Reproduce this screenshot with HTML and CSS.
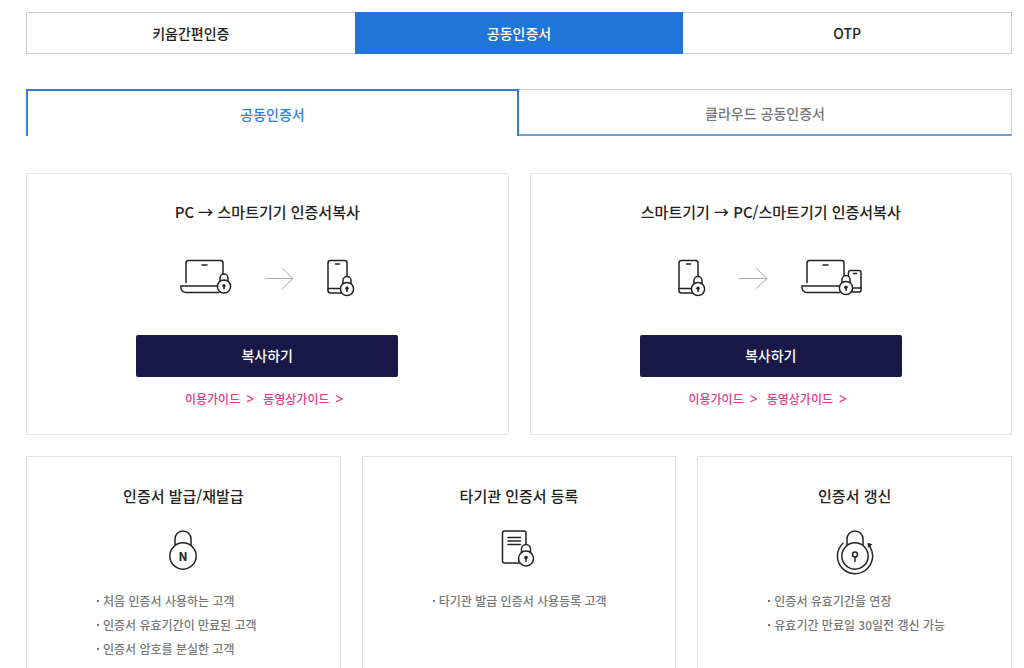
FILE: index.html
```html
<!DOCTYPE html>
<html lang="ko">
<head>
<meta charset="utf-8">
<meta name="viewport" content="width=device-width, initial-scale=1">
<title>공동인증서</title>
<link rel="stylesheet" href="styles.css">
</head>
<body>
<svg class="sprite" aria-hidden="true">
  <symbol id="lock-small" viewBox="0 0 16 22">
    <path class="solid" d="M4 10V5.500a4 4 0 0 1 8 0V10"/>
    <circle class="solid" cx="8" cy="14" r="6.600"/>
    <circle class="dot" cx="8" cy="13.200" r="1.700"/>
    <path d="M8 13.500v3"/>
  </symbol>
  <symbol id="phone" viewBox="0 0 28 38">
    <rect x="1" y="1.500" width="19" height="32.500" rx="2.500"/>
    <path d="M1 29.500h19M8.500 5h4"/>
    <use href="#lock-small" x="12" y="16" width="16" height="22"/>
  </symbol>
  <symbol id="arrow" viewBox="0 0 29 38">
    <path d="M0 19.500h28M17.500 9.500l10.500 10-10.500 10"/>
  </symbol>
</svg>

<main class="page">
  <nav class="tabs" aria-label="인증 방식">
    <button class="tab" type="button">키움간편인증</button>
    <button class="tab tab-active" type="button" aria-current="true">공동인증서</button>
    <button class="tab" type="button">OTP</button>
  </nav>

  <nav class="subtabs" aria-label="인증서 종류">
    <button class="subtab subtab-active" type="button" aria-current="true">공동인증서</button>
    <button class="subtab" type="button">클라우드 공동인증서</button>
  </nav>

  <section class="copy-cards">
    <article class="card copy-card">
      <h2 class="card-title">PC → 스마트기기 인증서복사</h2>
      <div class="devices">
        <svg class="icon" width="52" height="38" viewBox="0 0 52 38" aria-hidden="true">
          <path d="M6 23.500V4a2.500 2.500 0 0 1 2.500-2.500h32A2.500 2.500 0 0 1 43 4v12M22 6h5"/>
          <path d="M38 27H.800c0 4 2 6.500 5.200 6.500h33"/>
          <use href="#lock-small" x="36" y="13.500" width="16" height="22"/>
        </svg>
        <svg class="icon icon-arrow" width="29" height="38" aria-hidden="true"><use href="#arrow"/></svg>
        <svg class="icon" width="28" height="38" aria-hidden="true"><use href="#phone"/></svg>
      </div>
      <button class="copy-button" type="button">복사하기</button>
      <div class="guides">
        <a class="guide" href="#guide-pc">이용가이드 <span class="chevron">&gt;</span></a>
        <a class="guide" href="#video-pc">동영상가이드 <span class="chevron">&gt;</span></a>
      </div>
    </article>

    <article class="card copy-card">
      <h2 class="card-title">스마트기기 → PC/스마트기기 인증서복사</h2>
      <div class="devices">
        <svg class="icon" width="28" height="38" aria-hidden="true"><use href="#phone"/></svg>
        <svg class="icon icon-arrow" width="29" height="38" aria-hidden="true"><use href="#arrow"/></svg>
        <svg class="icon" width="62" height="38" viewBox="0 0 62 38" aria-hidden="true">
          <path d="M6 23.500V4a2.500 2.500 0 0 1 2.500-2.500h32A2.500 2.500 0 0 1 43 4v12M22 6h5"/>
          <path d="M38 27H.800c0 4 2 6.500 5.200 6.500h33"/>
          <rect class="solid" x="47.500" y="11.500" width="12.500" height="21.500" rx="2"/>
          <path d="M48 29h12M52.500 14.500h3"/>
          <use href="#lock-small" x="37" y="15" width="16" height="22"/>
        </svg>
      </div>
      <button class="copy-button" type="button">복사하기</button>
      <div class="guides">
        <a class="guide" href="#guide-mobile">이용가이드 <span class="chevron">&gt;</span></a>
        <a class="guide" href="#video-mobile">동영상가이드 <span class="chevron">&gt;</span></a>
      </div>
    </article>
  </section>

  <section class="service-cards">
    <article class="card service-card">
      <h2 class="card-title">인증서 발급/재발급</h2>
      <svg class="icon service-icon" width="38" height="46" viewBox="0 0 38 46" aria-hidden="true">
        <path d="M11 16V9a8 8 0 0 1 16 0v7"/>
        <circle class="solid" cx="19" cy="26" r="13.200"/>
        <text class="lock-letter" x="19" y="30.500">N</text>
      </svg>
      <ul class="notes">
        <li class="note">처음 인증서 사용하는 고객</li>
        <li class="note">인증서 유효기간이 만료된 고객</li>
        <li class="note">인증서 암호를 분실한 고객</li>
      </ul>
    </article>

    <article class="card service-card">
      <h2 class="card-title">타기관 인증서 등록</h2>
      <svg class="icon service-icon" width="38" height="46" viewBox="0 0 38 46" aria-hidden="true">
        <rect x="2.500" y="1" width="23.500" height="32" rx="2"/>
        <path d="M8 7.500h12.500M8 11h12.500M8 14.500h12.500"/>
        <path class="solid" d="M21.500 23v-4a4.500 4.500 0 0 1 9 0v4"/>
        <circle class="solid" cx="26" cy="28.500" r="7.500"/>
        <circle class="dot" cx="26" cy="27.500" r="1.800"/>
        <path d="M26 28v3.500"/>
      </svg>
      <ul class="notes">
        <li class="note">타기관 발급 인증서 사용등록 고객</li>
      </ul>
    </article>

    <article class="card service-card">
      <h2 class="card-title">인증서 갱신</h2>
      <svg class="icon service-icon" width="38" height="46" viewBox="0 0 38 46" aria-hidden="true">
        <path d="M11 16V9a8 8 0 0 1 16 0v7"/>
        <circle class="solid" cx="19" cy="26" r="13.200"/>
        <path d="M7 13.200A17.600 17.600 0 1 0 33.500 16"/>
        <path class="arrowhead" d="M31.500 12.800l5 1.500-4.500 3.500z"/>
        <circle cx="19" cy="24.500" r="2.500"/>
        <path d="M19 27v4.500"/>
      </svg>
      <ul class="notes">
        <li class="note">인증서 유효기간을 연장</li>
        <li class="note">유효기간 만료일 30일전 갱신 가능</li>
      </ul>
    </article>
  </section>
</main>
</body>
</html>
```
FILE: styles.css
```css
* {
  box-sizing: border-box;
}

body {
  margin: 0;
  background: #fff;
  color: #222;
  font-family: "Noto Sans CJK KR", "Noto Sans", sans-serif;
  font-size: 14px;
  font-weight: 500;
}

button {
  font: inherit;
  cursor: pointer;
}

.sprite {
  position: absolute;
  width: 0;
  height: 0;
}

.page {
  padding: 12px 12px 0 26px;
}

.tabs {
  display: grid;
  grid-template-columns: repeat(3, 1fr);
}

.tab {
  height: 42px;
  padding: 0;
  border: 1px solid #ccc;
  background: #fff;
  color: #222;
}

.tab:first-child {
  border-right: 0;
}

.tab:last-child {
  border-left: 0;
}

.tab-active {
  border-color: #1f75d8;
  background: #1f75d8;
  color: #fff;
}

.subtabs {
  display: grid;
  grid-template-columns: repeat(2, 1fr);
  margin-top: 35px;
}

.subtab {
  height: 47px;
  padding: 2px 0 0;
  border: 1px solid #ccc;
  border-width: 1px 1px 2px 0;
  border-bottom-color: #6f9fdb;
  background: #fff;
  color: #777;
}

.subtab-active {
  padding: 0;
  border: 2px solid #2f7fdb;
  border-bottom: 0;
  color: #2f7fdb;
}

.copy-cards,
.service-cards {
  display: grid;
  gap: 21px;
}

.copy-cards {
  grid-template-columns: repeat(2, 1fr);
  margin-top: 37px;
}

.service-cards {
  grid-template-columns: repeat(3, 1fr);
  margin-top: 21px;
}

.card {
  display: flex;
  flex-direction: column;
  align-items: center;
  border: 1px solid #e5e5e5;
}

.copy-card {
  padding: 26px 20px 25px;
}

.card-title {
  margin: 0;
  font-size: 15px;
  font-weight: 500;
  line-height: 24px;
}

.devices {
  display: flex;
  gap: 33px;
  margin-top: 35px;
}

.icon {
  display: block;
  fill: none;
  stroke: #222;
  stroke-width: 1.5;
  stroke-linecap: round;
  stroke-linejoin: round;
}

.icon-arrow {
  stroke: #aaa;
  stroke-width: 1;
}

.solid {
  fill: #fff;
}

.dot,
.arrowhead {
  fill: #222;
  stroke: none;
}

.lock-letter {
  fill: #222;
  stroke: none;
  font-size: 12px;
  font-weight: 700;
  text-anchor: middle;
}

.copy-button {
  width: 262px;
  max-width: 100%;
  height: 42px;
  margin-top: 38px;
  padding: 0 0 2px;
  border: 0;
  border-radius: 2px;
  background: #191847;
  color: #fff;
}

.guides {
  display: flex;
  gap: 9px;
  margin-top: 12px;
  padding-right: 6px;
}

.guide {
  display: flex;
  gap: 6px;
  color: #e9388a;
  font-size: 12px;
  line-height: 20px;
  text-decoration: none;
}

.chevron {
  font-family: "Noto Sans", sans-serif;
  font-size: 14px;
}

.service-card {
  padding: 27px 0 32px;
}

.service-icon {
  margin-top: 22px;
}

.notes {
  align-self: stretch;
  margin: 13px 0 0;
  padding: 0 0 0 70px;
  list-style: none;
  color: #777;
  font-size: 12px;
  line-height: 24px;
}

.note {
  display: flex;
  align-items: center;
  gap: 4px;
}

.note::before {
  width: 2px;
  height: 2px;
  background: #777;
  content: "";
}
```
